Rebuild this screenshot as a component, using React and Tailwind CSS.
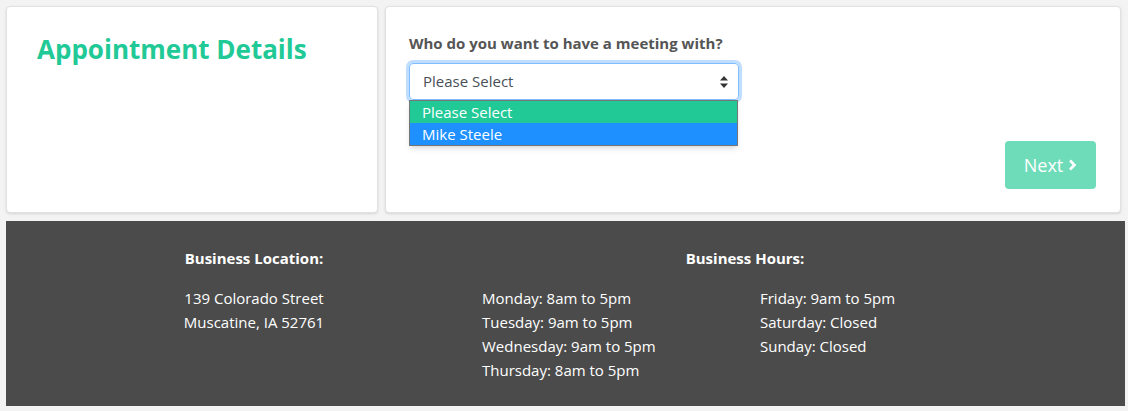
import React from "react";

const hours = [
  ["Monday: 8am to 5pm", "Tuesday: 9am to 5pm", "Wednesday: 9am to 5pm", "Thursday: 8am to 5pm"],
  ["Friday: 9am to 5pm", "Saturday: Closed", "Sunday: Closed"],
];

const App = () => {
  return (
    <div
      className="bg-[#f3f3f4] w-[1128px] h-[411px] px-[6px] pt-[6px] text-[15px]"
      style={{ fontFamily: "'Open Sans', Lato, sans-serif" }}
    >
      <div className="flex gap-[7px] h-[207px] w-[1115px]">
        <div className="w-[372px] bg-white border border-[#e2e2e6] rounded-[4px] shadow-sm pl-[30px] pt-[29px]">
          <h1 className="text-[26px] font-bold text-[#21c996] leading-none">Appointment Details</h1>
        </div>

        <div className="flex-1 bg-white border border-[#e2e2e6] rounded-[4px] shadow-sm pl-[23px] pr-[24px] pt-[26px] relative">
          <p className="font-bold text-[#555] leading-5">Who do you want to have a meeting with?</p>
          <div className="relative w-[330px] mt-[10px]">
            <div className="h-[37px] border border-[#80bdff] rounded-[4px] shadow-[0_0_0_3px_rgba(0,123,255,0.25)] flex items-center justify-between pl-[13px] pr-[10px] text-[#495057]">
              <span>Please Select</span>
              <svg width="8" height="12" viewBox="0 0 8 12" fill="#333">
                <path d="M4 0 L8 4.5 H0 Z" />
                <path d="M4 12 L8 7.5 H0 Z" />
              </svg>
            </div>
            <div className="absolute left-0 top-[37px] w-[329px] border border-[#767676] shadow-md text-white leading-[22px]">
              <div className="bg-[#21c996] pl-[12px]">Please Select</div>
              <div className="bg-[#1e90ff] pl-[12px]">Mike Steele</div>
            </div>
          </div>
          <button className="absolute right-[24px] bottom-[23px] w-[91px] h-[48px] rounded-[4px] bg-[#6fdcb9] text-white text-[18px] flex items-center justify-center gap-[5px]">
            Next
            <svg width="9" height="12" viewBox="0 0 9 12" fill="none" stroke="white" strokeWidth="2.6">
              <path d="M2 1.5 L6.5 6 L2 10.5" />
            </svg>
          </button>
        </div>
      </div>

      <div className="mt-[8px] h-[185px] w-[1119px] bg-[#4b4b4b] text-white flex pt-[27px]">
        <div className="w-[200px] ml-[148px] text-center">
          <h3 className="font-bold leading-5">Business Location:</h3>
          <div className="mt-[18px] leading-6">
            <p>139 Colorado Street</p>
            <p>Muscatine, IA 52761</p>
          </div>
        </div>
        <div className="w-[526px] ml-[128px]">
          <h3 className="font-bold leading-5 text-center">Business Hours:</h3>
          <div className="mt-[18px] grid grid-cols-[278px_auto] leading-6">
            {hours.map((col, i) => (
              <div key={i}>
                {col.map((line) => (
                  <p key={line}>{line}</p>
                ))}
              </div>
            ))}
          </div>
        </div>
      </div>
    </div>
  );
};

export default App;
